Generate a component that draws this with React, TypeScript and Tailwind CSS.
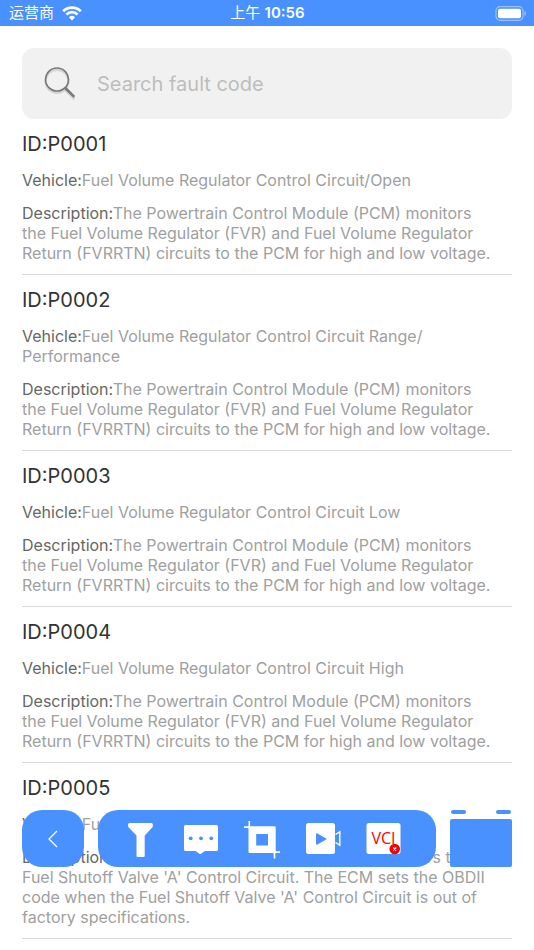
interface FaultCode {
    id: string;
    vehicle: string;
    description: string;
}

const POWERTRAIN =
    'The Powertrain Control Module (PCM) monitors the Fuel Volume Regulator (FVR) and Fuel Volume Regulator Return (FVRRTN) circuits to the PCM for high and low voltage.';

const faultCodes: FaultCode[] = [
    { id: 'P0001', vehicle: 'Fuel Volume Regulator Control Circuit/Open', description: POWERTRAIN },
    { id: 'P0002', vehicle: 'Fuel Volume Regulator Control Circuit Range/ Performance', description: POWERTRAIN },
    { id: 'P0003', vehicle: 'Fuel Volume Regulator Control Circuit Low', description: POWERTRAIN },
    { id: 'P0004', vehicle: 'Fuel Volume Regulator Control Circuit High', description: POWERTRAIN },
    {
        id: 'P0005',
        vehicle: "Fuel Shutoff Valve 'A' Control",
        description:
            "The Engine Control Module (ECM) monitors the Fuel Shutoff Valve 'A' Control Circuit. The ECM sets the OBDII code when the Fuel Shutoff Valve 'A' Control Circuit is out of factory specifications.",
    },
];

const StatusBar = () => (
    <header className="grid h-[26px] grid-cols-3 items-center bg-[#4891ff] pl-[9px] pr-2 text-[15px] leading-5 text-white">
        <div className="flex items-center gap-2">
            <span>运营商</span>
            <svg width="20" height="15" viewBox="0 0 20 15" fill="none" stroke="currentColor" strokeWidth="2.7">
                <path d="M1.2 5.2a12.6 12.6 0 0 1 17.6 0" />
                <path d="M4.4 8.5a8 8 0 0 1 11.2 0" />
                <path d="M10 14.4 7 11.3a4.3 4.3 0 0 1 6 0Z" fill="currentColor" stroke="none" />
            </svg>
        </div>
        <div className="text-center">
            上午 <span className="font-semibold">10:56</span>
        </div>
        <svg className="justify-self-end" width="32" height="15" viewBox="0 0 32 15">
            <rect x="2" y="0.7" width="27" height="13.6" rx="4" fill="none" stroke="#fff" strokeOpacity="0.45" strokeWidth="1.2" />
            <rect x="4" y="2.7" width="23" height="9.6" rx="2" fill="#fff" />
            <path d="M30.5 5v5c1-.4 1.500-1.400 1.500-2.500S31.500 5.400 30.500 5Z" fill="#fff" fillOpacity="0.5" />
        </svg>
    </header>
);

const SearchBar = () => (
    <label className="flex h-[71px] items-center gap-5 rounded-xl bg-[#f1f1f1] pl-[22px] pr-4">
        <svg width="33" height="34" viewBox="0 0 33 34" fill="none" className="shrink-0">
            <g stroke="#000" strokeOpacity="0.12">
                <circle cx="13" cy="14.5" r="11.500" strokeWidth="2" />
                <path d="m21.500 23 9 9" strokeWidth="3" />
            </g>
            <g stroke="#777">
                <circle cx="13" cy="12.500" r="11.500" strokeWidth="1.600" />
                <path d="m21.300 21 9 8.800" strokeWidth="2.500" />
            </g>
        </svg>
        <input
            type="text"
            aria-label="Search fault code"
            placeholder="Search fault code"
            className="min-w-0 flex-1 bg-transparent text-xl text-[#333] outline-none placeholder:text-[#bdbdbd]"
        />
    </label>
);

const FaultItem = ({ item }: { item: FaultCode }) => (
    <li className="border-b border-[#d9d9d9] pb-[11px] pt-[13px] text-base leading-5 text-[#a0a0a0]">
        <h2 className="mb-[14px] text-xl leading-6 text-[#333]">ID:{item.id}</h2>
        <p className="mb-[13px] pr-4">
            <span className="text-[#666]">Vehicle:</span>
            {item.vehicle}
        </p>
        <p className="pr-4">
            <span className="text-[#666]">Description:</span>
            {item.description}
        </p>
    </li>
);

const FilterIcon = () => (
    <svg width="36" height="40" viewBox="0 0 36 40" fill="currentColor">
        <path d="M7.500 4h22a1.500 1.500 0 0 1 1.300 1.500v1.700c0 .6-.2 1-.6 1.400L22.700 16.500V37a1 1 0 0 1-1 1h-6.200a1 1 0 0 1-1-1V16.500L6.700 8.600c-.4-.4-.6-.8-.6-1.400V5.500A1.500 1.500 0 0 1 7.500 4Z" />
    </svg>
);

const ChatIcon = () => (
    <svg width="36" height="40" viewBox="0 0 36 40">
        <path d="M2.500 6h31A1.500 1.500 0 0 1 35 7.500v23a1.500 1.500 0 0 1-1.500 1.500H22l-4.800 3.200L12.500 32h-10A1.500 1.500 0 0 1 1 30.500v-23A1.500 1.500 0 0 1 2.500 6Z" fill="currentColor" />
        <g fill="#4891ff">
            <circle cx="7.700" cy="19.300" r="1.900" />
            <circle cx="18" cy="19.300" r="1.900" />
            <circle cx="28.300" cy="19.300" r="1.900" />
        </g>
    </svg>
);

const CropIcon = () => (
    <svg width="36" height="40" viewBox="0 0 36 40" fill="none" stroke="currentColor">
        <path d="M0 8.200h6M5.300 2v7M29 33.200h7M30.500 32v7.500" strokeWidth="1.700" />
        <path fillRule="evenodd" fill="currentColor" stroke="none" d="M4.500 7.300h26a1.200 1.200 0 0 1 1.200 1.200V34H5.700a1.200 1.200 0 0 1-1.200-1.200V7.300ZM12.200 15v11.500h11.800V15Z" />
    </svg>
);

const VideoIcon = () => (
    <svg width="36" height="40" viewBox="0 0 36 40">
        <rect x="1" y="4" width="29" height="31" rx="2.500" fill="currentColor" />
        <path d="m30.500 15.500 4.300-2.700v13.400l-4.300-2.700" fill="none" stroke="currentColor" strokeWidth="1.400" />
        <path d="M11 15.200c0-.8.800-1 1.400-.7l8.800 5c.5.300.5.800 0 1.100l-8.800 5c-.6.300-1.400 0-1.400-.7Z" fill="#4891ff" />
    </svg>
);

const VciIcon = () => (
    <svg width="36" height="40" viewBox="0 0 36 40">
        <rect x="0.500" y="4" width="34" height="31" rx="2.500" fill="#fff" />
        <text x="5.500" y="25" fontSize="16" fill="#f00" style={{ fontFamily: '"Open Sans", sans-serif' }}>VCI</text>
        <circle cx="28.700" cy="30" r="5.300" fill="#f00" />
        <path d="m27.200 28.500 3 3m0-3-3 3" stroke="#fff" strokeWidth="1.100" />
    </svg>
);

const tools = [
    { label: 'Filter', Icon: FilterIcon },
    { label: 'Feedback', Icon: ChatIcon },
    { label: 'Crop', Icon: CropIcon },
    { label: 'Record', Icon: VideoIcon },
    { label: 'VCI', Icon: VciIcon },
];

const BottomBar = () => (
    <nav className="fixed inset-x-[22px] bottom-[83px] flex h-[57px] gap-[14px] text-white">
        <button aria-label="Back" className="flex w-[62px] items-center justify-center rounded-[20px] bg-[#4891ff]">
            <svg width="10" height="18" viewBox="0 0 10 18" fill="none" stroke="currentColor" strokeWidth="1.300">
                <path d="M9 1 1 9l8 8" />
            </svg>
        </button>
        <div className="flex flex-1 items-center justify-between rounded-[20px] bg-[#4891ff] pl-6 pr-[34px]">
            {tools.map(({ label, Icon }) => (
                <button key={label} aria-label={label}>
                    <Icon />
                </button>
            ))}
        </div>
        <button aria-label="Battery" className="flex w-[62px] flex-col gap-[5px]">
            <span className="flex w-full justify-between px-px">
                <span className="h-1 w-[15px] rounded-xs bg-[#4891ff]" />
                <span className="h-1 w-[15px] rounded-xs bg-[#4891ff]" />
            </span>
            <span className="w-full flex-1 rounded-xs bg-[#4891ff]" />
        </button>
    </nav>
);

const App = () => {
    return (
        <div className="min-h-screen bg-white font-['Inter','Noto_Sans_CJK_SC',sans-serif]">
            <StatusBar />
            <main className="px-[22px] pt-[22px]">
                <SearchBar />
                <ul>
                    {faultCodes.map((item) => (
                        <FaultItem key={item.id} item={item} />
                    ))}
                </ul>
            </main>
            <BottomBar />
        </div>
    );
};

export default App;
